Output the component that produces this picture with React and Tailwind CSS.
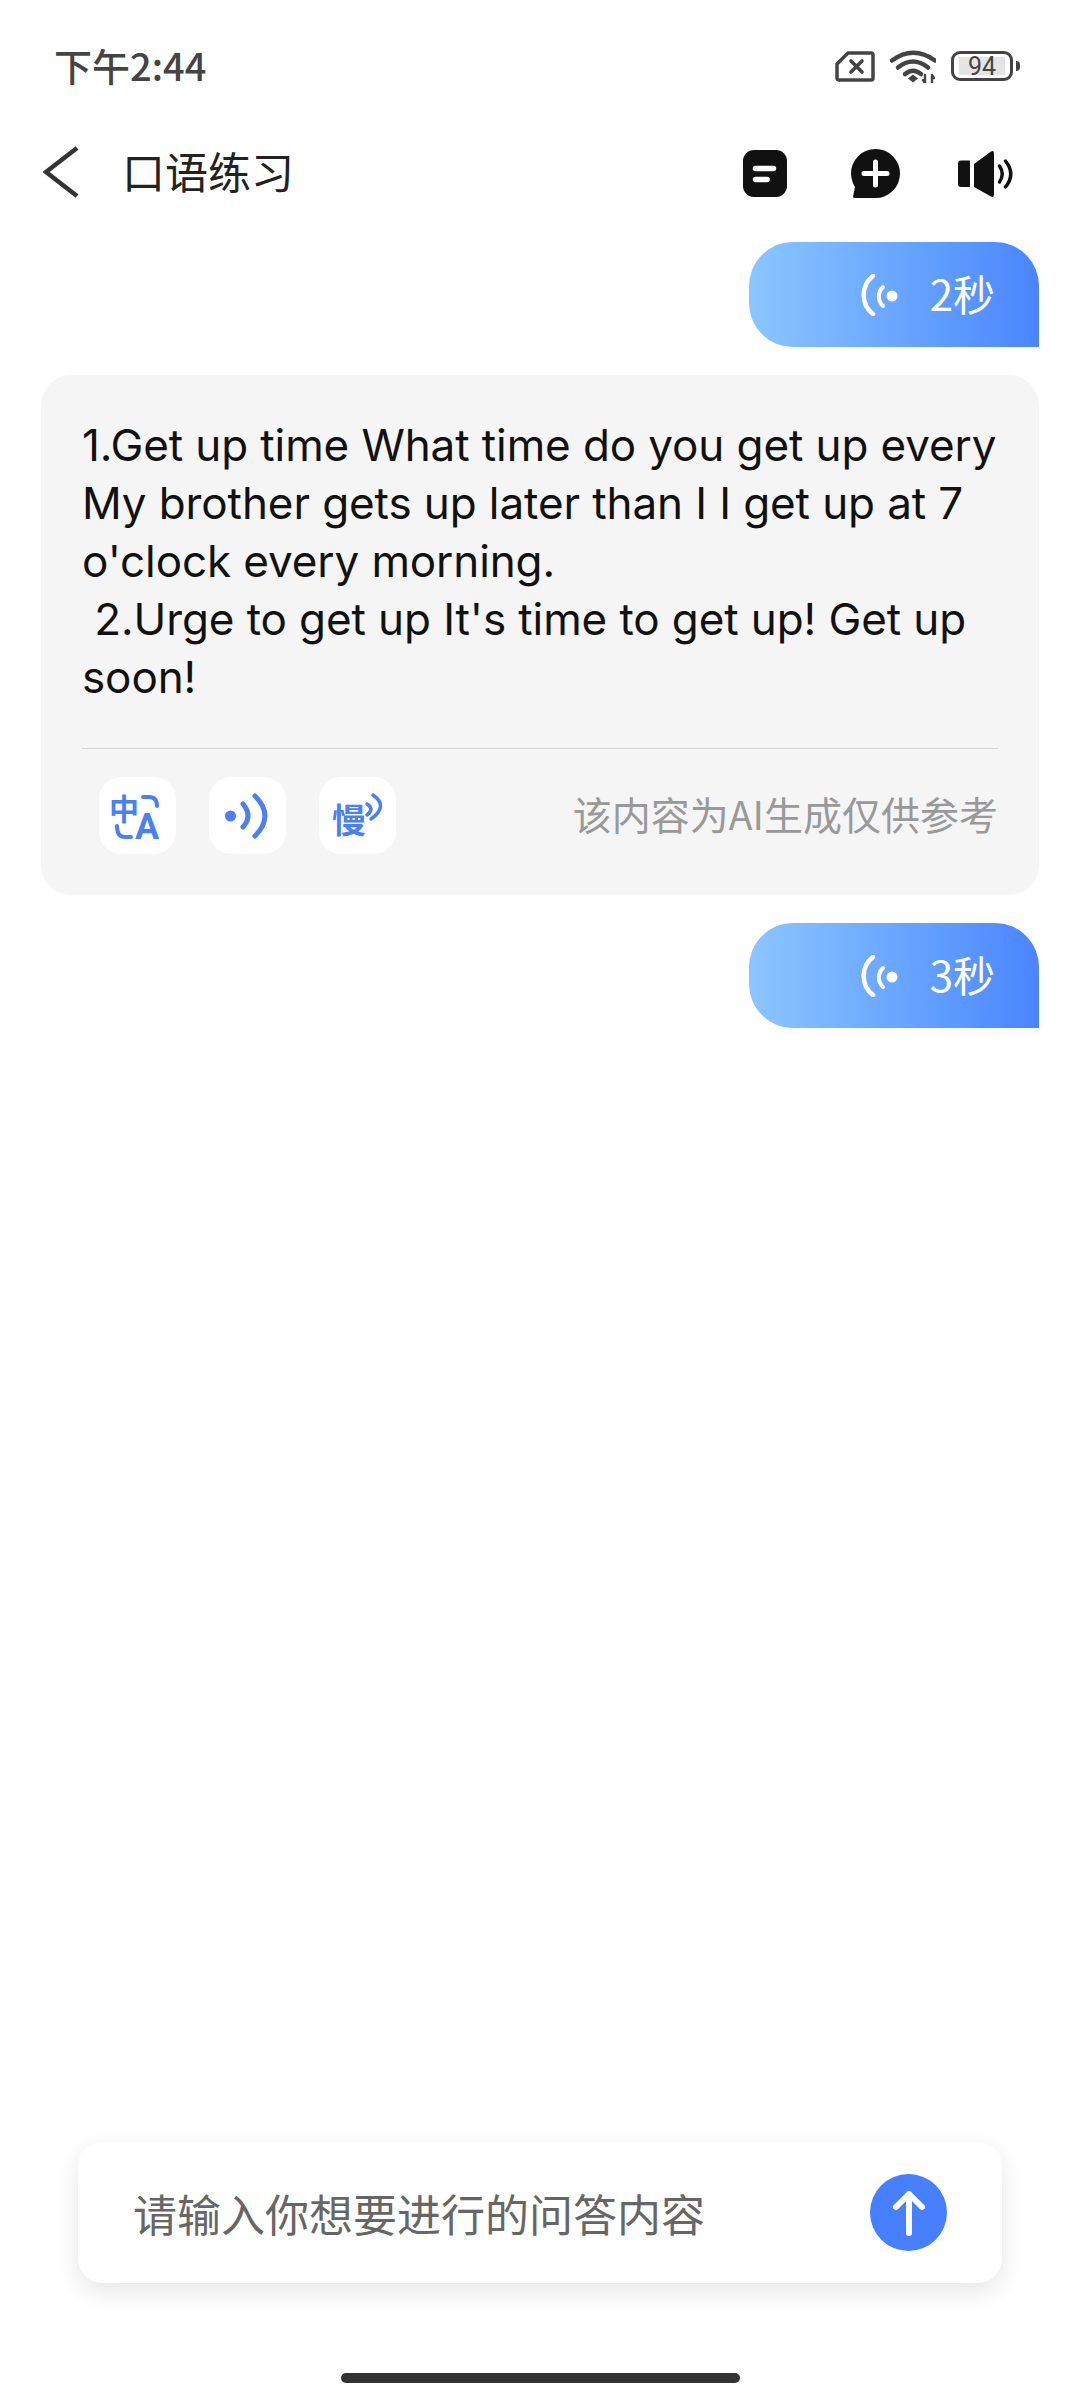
const cjk = "font-['Noto_Sans_CJK_SC','Noto_Sans',sans-serif]";

function SimIcon() {
  return (
    <svg width="40" height="31" viewBox="0 0 40 31" fill="none" stroke="#444" strokeLinejoin="round">
      <path d="M13 2H36a2 2 0 0 1 2 2V27a2 2 0 0 1-2 2H4a2 2 0 0 1-2-2V13Z" strokeWidth="3.5" />
      <path d="M16 10L27 21M27 10L16 21" strokeWidth="3.6" strokeLinecap="round" />
    </svg>
  );
}

function WifiIcon() {
  return (
    <svg width="46" height="33" viewBox="0 0 46 33" fill="none" stroke="#444" strokeLinecap="round">
      <path d="M2 10.5Q23-5 45 10.5" strokeWidth="4.5" />
      <path d="M8 17.5Q23 5.5 38 17.5" strokeWidth="4.5" />
      <path d="M15 24Q23 17.5 31 24" strokeWidth="4.5" />
      <path d="M23 24.5L28 28.5L23 32.5L18 28.5Z" fill="#444" stroke="none" />
      <path d="M35 25V33M33 30L35 33M42 33V25M44 28L42 25" strokeWidth="2.4" />
    </svg>
  );
}

function Battery() {
  return (
    <div className="flex items-center">
      <div className="flex h-[30px] w-[62px] items-center justify-center rounded-[9px] border-[3.5px] border-[#444]">
        <div className="flex h-[18px] w-[46px] items-center justify-center bg-[#e4e4e4] font-['Roboto',sans-serif] text-[25px] leading-none text-[#444]">
          94
        </div>
      </div>
      <div className="ml-[3px] h-[10px] w-[4px] rounded-r-full bg-[#444]" />
    </div>
  );
}

function NoteIcon() {
  return (
    <svg width="44" height="47" viewBox="0 0 44 47">
      <path d="M11 0H33A11 11 0 0 1 44 11V36a11 11 0 0 1-11 11H11A11 11 0 0 1 0 36V11A11 11 0 0 1 11 0Z" fill="#111" />
      <path d="M12.500 18.500H30.500M12.500 29.500H24" stroke="#fff" strokeWidth="5.500" strokeLinecap="round" />
    </svg>
  );
}

function ChatPlusIcon() {
  return (
    <svg width="50" height="50" viewBox="0 0 50 50">
      <circle cx="25.500" cy="24.500" r="24.500" fill="#111" />
      <path d="M5 38L3 47.500Q3 49 5 49H25V38Z" fill="#111" />
      <path d="M25.500 13V36M14 24.500H37" stroke="#fff" strokeWidth="5" strokeLinecap="round" />
    </svg>
  );
}

function SpeakerIcon() {
  return (
    <svg width="57" height="48" viewBox="0 0 57 48" fill="none">
      <path d="M3 10.500H12V37H3A3 3 0 0 1 0 34V13.500A3 3 0 0 1 3 10.500Z" fill="#111" />
      <path d="M16 14L33 1.500Q36 0 36 3.500V44.500Q36 48 33 46.500L16 37Z" fill="#111" />
      <path d="M41.500 16Q47 24 41.500 32" stroke="#111" strokeWidth="3.500" strokeLinecap="round" />
      <path d="M47.500 11Q58 24 47.500 37" stroke="#111" strokeWidth="3.500" strokeLinecap="round" />
    </svg>
  );
}

function WaveIcon() {
  return (
    <svg width="38" height="42" viewBox="0 0 38 42" fill="none" stroke="#fff" strokeLinecap="round">
      <path d="M13 2A24 24 0 0 0 13 40" strokeWidth="4.500" />
      <path d="M23 13A13 13 0 0 0 23 32" strokeWidth="4" />
      <circle cx="32" cy="22" r="5.500" fill="#fff" stroke="none" />
    </svg>
  );
}

function VoiceBubble({ seconds }) {
  return (
    <div className="flex justify-end">
      <div className="flex h-[105px] w-[290px] items-center justify-end gap-[32px] rounded-[44px] rounded-br-none bg-gradient-to-r from-[#8cc6ff] to-[#4a85ff] pr-[44px]">
        <WaveIcon />
        <span className={`${cjk} pb-[4px] text-[42px] leading-none text-white`}>{seconds}秒</span>
      </div>
    </div>
  );
}

function TranslateBtn() {
  return (
    <svg width="77" height="77" viewBox="0 0 77 77" fill="none" stroke="#4a80f0" strokeWidth="4" strokeLinecap="round">
      <text x="10" y="43" fontSize="30" fontWeight="700" fill="#4a80f0" stroke="none" className={cjk}>中</text>
      <text x="36" y="62" fontSize="36" fontWeight="700" fill="#4a80f0" stroke="none" className="font-['Roboto',sans-serif]">A</text>
      <path d="M44 20H50Q58 20 58 29" />
      <path d="M18 49Q18 60 26 60H32" />
    </svg>
  );
}

function PlayBtn() {
  return (
    <svg width="77" height="77" viewBox="0 0 77 77" fill="none" stroke="#4a80f0" strokeWidth="5" strokeLinecap="round">
      <circle cx="21.500" cy="39" r="5.500" fill="#4a80f0" stroke="none" />
      <path d="M34 27Q44 39 34 50" />
      <path d="M46 19Q66 39 46 59" />
    </svg>
  );
}

function SlowBtn() {
  return (
    <svg width="77" height="77" viewBox="0 0 77 77" fill="none" stroke="#4a80f0" strokeWidth="3.500" strokeLinecap="round">
      <text x="13" y="56" fontSize="34" fontWeight="700" fill="#4a80f0" stroke="none" className={cjk}>慢</text>
      <path d="M48 27Q56 32 48 38" />
      <path d="M54 18Q70 29 52 42" />
    </svg>
  );
}

const lines = [
  "1.Get up time What time do you get up every",
  "My brother gets up later than I I get up at 7",
  "o'clock every morning.",
  " 2.Urge to get up It's time to get up! Get up",
  "soon!",
];

export default function App() {
  return (
    <div className="flex h-screen flex-col overflow-hidden bg-white">
      {/* status bar */}
      <div className="flex h-[86px] items-center pl-[54px] pr-[60px] pt-[46px]">
        <span className={`${cjk} pb-[3px] text-[38px] font-medium leading-none text-[#444]`}>下午2:44</span>
        <div className="ml-auto flex items-center gap-[15px]">
          <SimIcon />
          <WifiIcon />
          <Battery />
        </div>
      </div>

      {/* nav */}
      <div className="mt-[36px] flex h-[100px] items-center pl-[43px] pr-[65px]">
        <svg width="36" height="52" viewBox="0 0 36 52" fill="none" stroke="#333" strokeWidth="4.500">
          <path d="M34 2L3 26L34 50" />
        </svg>
        <span className={`${cjk} ml-[43px] pb-[3px] text-[43px] leading-none text-[#222]`}>口语练习</span>
        <div className="ml-auto flex items-center pt-[3px]">
          <NoteIcon />
          <div className="ml-[63px]"><ChatPlusIcon /></div>
          <div className="ml-[58px]"><SpeakerIcon /></div>
        </div>
      </div>

      {/* messages */}
      <div className="flex flex-1 flex-col px-[41px] pt-[20px]">
        <VoiceBubble seconds={2} />
        <div className="mt-[28px] rounded-[30px] bg-[#f5f5f5] px-[41px] pb-[41px] pt-[41px]">
          <div className="font-['Inter',sans-serif] text-[44px] leading-[58px] tracking-[-0.1px] text-[#111]">
            {lines.map((line) => (
              <div key={line} className="whitespace-pre">{line}</div>
            ))}
          </div>
          <div className="mt-[42px] h-px bg-[#d4d4d4]" />
          <div className="mt-[28px] flex items-center pl-[17px]">
            <div className="h-[77px] w-[77px] rounded-[22px] bg-white"><TranslateBtn /></div>
            <div className="ml-[33px] h-[77px] w-[77px] rounded-[22px] bg-white"><PlayBtn /></div>
            <div className="ml-[33px] h-[77px] w-[77px] rounded-[22px] bg-white"><SlowBtn /></div>
            <span className={`${cjk} ml-auto pb-[5px] text-[39px] leading-none text-[#999]`}>该内容为AI生成仅供参考</span>
          </div>
        </div>
        <div className="mt-[28px]">
          <VoiceBubble seconds={3} />
        </div>
      </div>

      {/* input */}
      <div className="mx-[78px] flex h-[141px] items-center rounded-[24px] bg-white pl-[55px] pr-[55px] shadow-[0_8px_24px_rgba(0,0,0,0.1)]">
        <span className={`${cjk} text-[44px] leading-none text-[#666]`}>请输入你想要进行的问答内容</span>
        <div className="ml-auto flex h-[77px] w-[77px] items-center justify-center rounded-full bg-[#4680ff]">
          <svg width="40" height="48" viewBox="0 0 40 48" fill="none" stroke="#fff" strokeWidth="6" strokeLinecap="round" strokeLinejoin="round">
            <path d="M20 44V5M7 18L20 5L33 18" />
          </svg>
        </div>
      </div>

      {/* home bar */}
      <div className="mx-auto mb-[17px] mt-[90px] h-[10px] w-[399px] rounded-full bg-[#333]" />
    </div>
  );
}
